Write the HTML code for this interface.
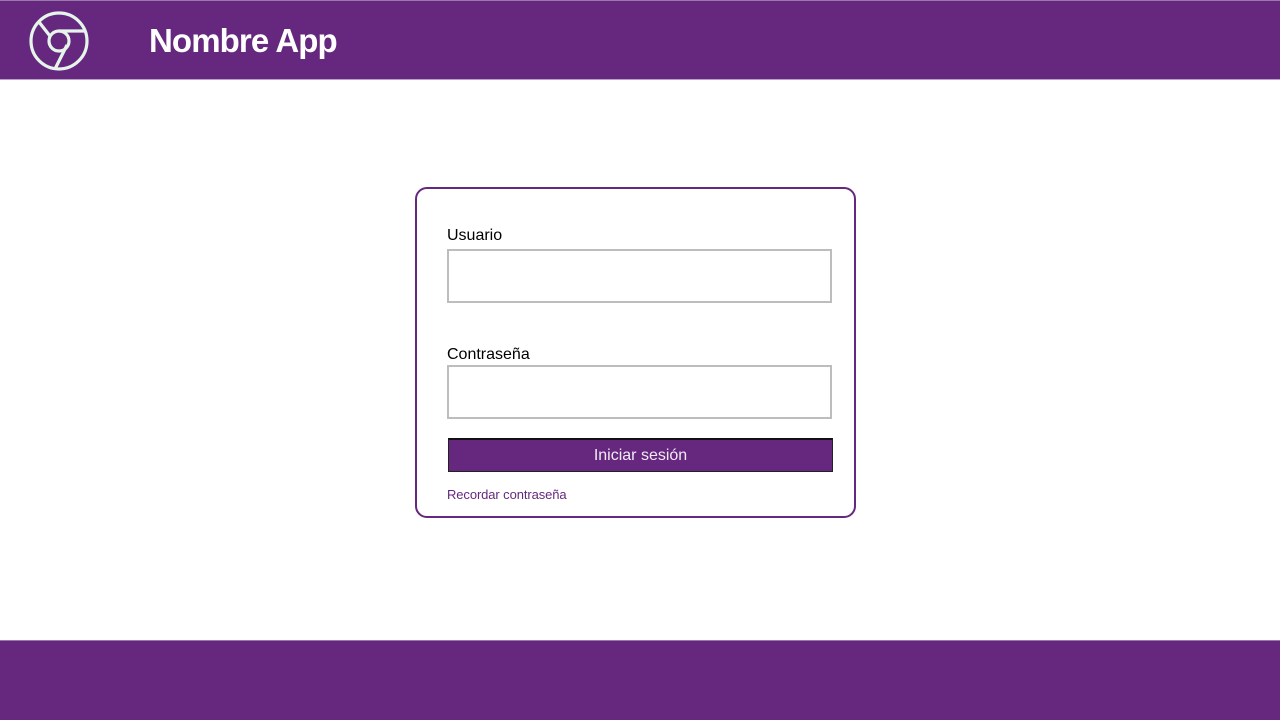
<!DOCTYPE html>
<html><head><meta charset="utf-8"><style>
body{margin:0;width:1280px;height:720px;position:relative;background:#fff;font-family:"Liberation Sans",sans-serif;overflow:hidden}
.hd{position:absolute;left:0;top:0;width:1280px;height:80px;background:#65287e;border-top:1px solid #9a78aa;box-sizing:border-box;border-bottom:1px solid #b9a0c6}
.ft{position:absolute;left:0;top:640px;width:1280px;height:80px;background:#65287e;border-top:1px solid #9a78aa;box-sizing:border-box}
.title{position:absolute;left:149px;top:21px;color:#fff;font-weight:bold;font-size:33px;letter-spacing:-0.9px}
.card{position:absolute;left:415px;top:187px;width:441px;height:331px;box-sizing:border-box;border:2px solid #65287e;border-radius:12px}
.lbl{position:absolute;left:447px;font-size:16px;color:#000}
.in{position:absolute;left:447px;width:385px;height:54px;box-sizing:border-box;border:2px solid #bdbdbd}
.btn{position:absolute;left:448px;top:438px;width:385px;height:34px;box-sizing:border-box;background:#65287e;border:1px solid #222;border-top:2px solid #111;color:#f2eaf5;font-size:16px;text-align:center;line-height:32px}
.lnk{position:absolute;left:447px;top:487px;font-size:13px;color:#65287e;letter-spacing:-0.1px}
</style></head><body>
<div class="hd">
<svg style="position:absolute;left:28px;top:9px" width="62" height="62" viewBox="0 0 62 62" fill="none" stroke="#e6f5ea" stroke-width="3.2">
<circle cx="31" cy="31" r="28"/><circle cx="31" cy="31" r="10"/>
<path d="M31 21 H58"/><path d="M22 26 L11 12"/><path d="M39 35 L27 59"/>
</svg>
<div class="title">Nombre App</div>
</div>
<div class="card"></div>
<div class="lbl" style="top:227px">Usuario</div>
<div class="in" style="top:249px"></div>
<div class="lbl" style="top:346px">Contraseña</div>
<div class="in" style="top:365px"></div>
<div class="btn">Iniciar sesión</div>
<div class="lnk">Recordar contraseña</div>
<div class="ft"></div>
</body></html>
